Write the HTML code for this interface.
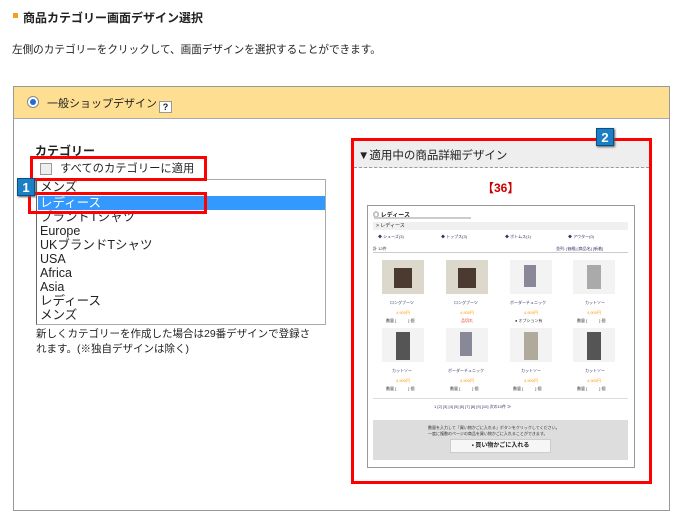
<!DOCTYPE html>
<html><head><meta charset="utf-8"><style>
*{margin:0;padding:0;box-sizing:border-box}
body{width:680px;height:518px;background:#fff;font-family:"Liberation Sans","Noto Sans CJK JP",sans-serif;font-size:11px;color:#222;position:relative;overflow:hidden}
.a{position:absolute}
.red{position:absolute;border:3px solid #f00}
.badge{position:absolute;width:18px;height:18px;background:#1a7fc4;border:1px solid #0b4f82;color:#fff;font-weight:bold;font-size:13px;text-align:center;line-height:17px;box-shadow:1px 1px 2px #555}
.tiny{font-size:4px;color:#336;position:absolute}
.img{position:absolute;width:42px;height:34px;background:#f3f3f3}
</style></head><body>
<div class="a" style="left:13px;top:13px;width:5px;height:5px;background:#f5a01a"></div>
<div class="a" style="left:23px;top:9px;font-weight:bold;font-size:12px">商品カテゴリー画面デザイン選択</div>
<div class="a" style="left:12px;top:42px;font-size:10.6px">左側のカテゴリーをクリックして、画面デザインを選択することができます。</div>
<div class="a" style="left:13px;top:86px;width:657px;height:425px;border:1px solid #999"></div>
<div class="a" style="left:14px;top:87px;width:655px;height:32px;background:#fede90;border-bottom:1px solid #aaa"></div>
<div class="a" style="left:27px;top:96px;width:12px;height:12px;border-radius:50%;border:1px solid #888;background:#fff"><div style="margin:2px;width:6px;height:6px;border-radius:50%;background:#1a6fd0"></div></div>
<div class="a" style="left:47px;top:95px;font-size:11px">一般ショップデザイン</div>
<div class="a" style="left:159px;top:101px;width:13px;height:12px;border:1px solid #999;background:#fff;font-size:9px;font-weight:bold;text-align:center;line-height:10px">?</div>
<div class="a" style="left:35px;top:142px;font-weight:bold;font-size:12px">カテゴリー</div>
<div class="a" style="left:40px;top:163px;width:12px;height:12px;border:1px solid #999;background:#eee"></div>
<div class="a" style="left:60px;top:160px;font-size:11.3px">すべてのカテゴリーに適用</div>
<div class="a" style="left:36px;top:179px;width:290px;height:146px;border:1px solid #aaa;border-left-color:#666;overflow:hidden;font-size:12.5px;line-height:14px;padding:0 0 0 3px">
<div>メンズ</div><div style="background:#3399ff;color:#fff;margin-left:-2px;padding-left:2px;margin-top:2px">レディース</div><div>ブランドTシャツ</div><div>Europe</div><div>UKブランドTシャツ</div><div>USA</div><div>Africa</div><div>Asia</div><div>レディース</div><div>メンズ</div></div>
<div class="a" style="left:36px;top:327px;line-height:15px;font-size:10.5px">新しくカテゴリーを作成した場合は29番デザインで登録さ<br>れます。(※独自デザインは除く)</div>
<div class="red" style="left:30px;top:156px;width:177px;height:25px"></div>
<div class="red" style="left:28px;top:192px;width:179px;height:22px"></div>
<div class="badge" style="left:17px;top:178px">1</div>

<div class="a" style="left:351px;top:138px;width:301px;height:346px;background:#fff"></div>
<div class="a" style="left:354px;top:141px;width:295px;height:27px;background:#eee;border-bottom:1px dashed #999"></div>
<div class="a" style="left:358px;top:147px;font-size:11.5px">▼適用中の商品詳細デザイン</div>
<div class="a" style="left:482px;top:179px;color:#c00;font-weight:bold;font-size:12px">【36】</div>
<div class="a" style="left:367px;top:205px;width:268px;height:92px;border:1px solid #999;border-bottom:none"></div>
<div class="a" style="left:367px;top:296px;width:268px;height:172px;border:1px solid #999;border-top:none"></div>
<div class="a" style="left:373px;top:210px;font-size:6px;font-weight:bold">◎ レディース</div>
<div class="a" style="left:374px;top:217px;width:97px;height:2px;background:#ccc"></div>
<div class="a" style="left:373px;top:222px;width:255px;height:8px;background:#f0f0f0;font-size:5px;padding-left:3px">&gt; レディース</div>
<div class="tiny" style="left:378px;top:234px">◆ シューズ(3)</div><div class="tiny" style="left:441px;top:234px">◆ トップス(3)</div><div class="tiny" style="left:505px;top:234px">◆ ボトムス(1)</div><div class="tiny" style="left:568px;top:234px">◆ アウター(0)</div>
<div class="tiny" style="left:373px;top:246px;color:#333">計 12件</div><div class="tiny" style="left:556px;top:246px">並列: [価格] [商品名] [新着]</div>
<div class="a" style="left:373px;top:252px;width:255px;height:1px;background:#ccc"></div>
<div class="img" style="left:382px;top:260px;background:#ddd8cc"></div><div class="img" style="left:446px;top:260px;background:#ddd8cc"></div><div class="img" style="left:510px;top:260px"></div><div class="img" style="left:573px;top:260px"></div>
<div class="img" style="left:382px;top:328px"></div><div class="img" style="left:446px;top:328px"></div><div class="img" style="left:510px;top:328px"></div><div class="img" style="left:573px;top:328px"></div>
<div class="a" style="left:394px;top:268px;width:18px;height:20px;background:#4a3a30"></div><div class="a" style="left:458px;top:268px;width:18px;height:20px;background:#4a3a30"></div>
<div class="a" style="left:524px;top:265px;width:12px;height:22px;background:#889"></div><div class="a" style="left:587px;top:265px;width:14px;height:24px;background:#aaa"></div>
<div class="a" style="left:396px;top:332px;width:14px;height:28px;background:#555"></div><div class="a" style="left:460px;top:332px;width:12px;height:24px;background:#889"></div><div class="a" style="left:524px;top:332px;width:14px;height:28px;background:#b0aa9c"></div><div class="a" style="left:587px;top:332px;width:14px;height:28px;background:#555"></div>
<div class="tiny" style="left:390px;top:300px">ロングブーツ</div><div class="tiny" style="left:454px;top:300px">ロングブーツ</div><div class="tiny" style="left:510px;top:300px">ボーダーチュニック</div><div class="tiny" style="left:585px;top:300px">カットソー</div>
<div class="tiny" style="left:392px;top:368px">カットソー</div><div class="tiny" style="left:448px;top:368px">ボーダーチュニック</div><div class="tiny" style="left:521px;top:368px">カットソー</div><div class="tiny" style="left:585px;top:368px">カットソー</div>
<div class="tiny" style="left:396px;top:310px;color:#f90">4,900円</div><div class="tiny" style="left:460px;top:310px;color:#f90">4,900円</div><div class="tiny" style="left:524px;top:310px;color:#f90">4,900円</div><div class="tiny" style="left:587px;top:310px;color:#f90">4,900円</div>
<div class="tiny" style="left:396px;top:378px;color:#f90">4,900円</div><div class="tiny" style="left:460px;top:378px;color:#f90">4,900円</div><div class="tiny" style="left:524px;top:378px;color:#f90">4,900円</div><div class="tiny" style="left:587px;top:378px;color:#f90">4,900円</div>
<div class="tiny" style="left:386px;top:318px;color:#333">数量 [　　　] 個</div><div class="tiny" style="left:461px;top:318px;color:#e33">品切れ</div><div class="tiny" style="left:515px;top:318px;color:#333">● オプション有</div><div class="tiny" style="left:577px;top:318px;color:#333">数量 [　　　] 個</div>
<div class="tiny" style="left:386px;top:386px;color:#333">数量 [　　　] 個</div><div class="tiny" style="left:450px;top:386px;color:#333">数量 [　　　] 個</div><div class="tiny" style="left:513px;top:386px;color:#333">数量 [　　　] 個</div><div class="tiny" style="left:577px;top:386px;color:#333">数量 [　　　] 個</div>
<div class="a" style="left:373px;top:398px;width:255px;height:1px;background:#ddd"></div>
<div class="tiny" style="left:434px;top:404px">1 [2] [3] [4] [5] [6] [7] [8] [9] [10] 次の10件 ≫</div>
<div class="a" style="left:373px;top:420px;width:255px;height:40px;background:#ddd"></div>
<div class="tiny" style="left:428px;top:425px;color:#333">数量を入力して「買い物かごに入れる」ボタンをクリックしてください。</div>
<div class="tiny" style="left:428px;top:431px;color:#333">一度に複数のページの商品を買い物かごに入れることができます。</div>
<div class="a" style="left:450px;top:439px;width:101px;height:14px;background:#f6f6f6;border:1px solid #ccc;font-size:6px;text-align:center;line-height:12px;font-weight:bold">▪ 買い物かごに入れる</div>
<div class="red" style="left:351px;top:138px;width:301px;height:346px"></div>
<div class="badge" style="left:596px;top:128px">2</div>
</body></html>
